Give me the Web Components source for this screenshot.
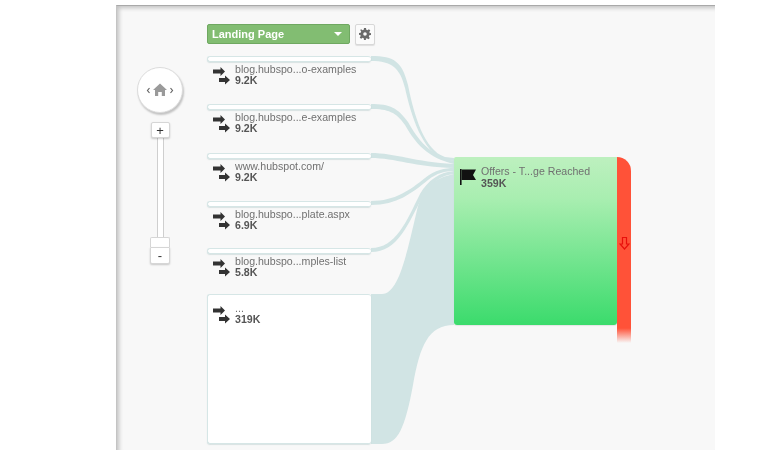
<!DOCTYPE html>
<html>
<head>
<meta charset="utf-8">
<style>
  html, body { margin: 0; background: #fff; overflow: hidden; }
  body { font-family: "Liberation Sans", Arial, sans-serif; }
</style>
</head>
<body>
<flow-panel>
  <zoom-control slot="zoom"></zoom-control>
  <step-select slot="toolbar">Landing Page</step-select>
  <flow-node slot="nodes" value="9.2K" pitch="48">blog.hubspo...o-examples</flow-node>
  <flow-node slot="nodes" value="9.2K" pitch="49">blog.hubspo...e-examples</flow-node>
  <flow-node slot="nodes" value="9.2K" pitch="48">www.hubspot.com/</flow-node>
  <flow-node slot="nodes" value="6.9K" pitch="47">blog.hubspo...plate.aspx</flow-node>
  <flow-node slot="nodes" value="5.8K" pitch="46">blog.hubspo...mples-list</flow-node>
  <flow-node slot="nodes" value="319K" pitch="150" big>...</flow-node>
  <goal-node slot="goal" value="359K">Offers - T...ge Reached</goal-node>
</flow-panel>

<script>
class FlowPanel extends HTMLElement {
  constructor() {
    super();
    this.attachShadow({ mode: "open" });
  }

  connectedCallback() {
    this.shadowRoot.innerHTML = `
      <style>
        :host { display: block; width: 768px; height: 450px; background: #fff; overflow: hidden; }
        .panel {
          position: relative;
          box-sizing: border-box;
          margin: 5px 0 0 116px;
          width: 599px;
          height: 445px;
          background: #f8f8f8;
          display: flex;
          border-top: 1px solid #a9a9a9;
          border-left: 1px solid #c4c4c4;
          box-shadow: inset 3px 3px 4px -1px rgba(0,0,0,.22);
          filter: blur(.5px);
        }
        .links { position: absolute; left: -117px; top: -6px; width: 768px; height: 450px; }
        .links path { fill: #d1e4e4; }
        .left { position: relative; width: 90px; padding: 0 0 0 20px; box-sizing: border-box; padding-top: 61px; }
        .middle { position: relative; width: 247px; display: flex; flex-direction: column; padding-top: 18px; }
        .nodes { display: flex; flex-direction: column; margin-top: 12px; }
        .right { position: relative; padding-top: 151px; }
      </style>
      <div class="panel">
        <svg class="links" viewBox="0 0 768 450">
          <path d="M371 56 C 395 56 402 62 408 85 C 414 115 424 150 445 157 L454 158 L454 161 L445 160 C 422 152 411 115 405 88 C 400 68 392 61 371 61 Z"/>
          <path d="M371 104 C 390 104 398 108 408 122 C 418 140 430 155 454 161 L454 164 C 428 158 415 143 405 125 C 396 112 388 109 371 109 Z"/>
          <path d="M371 153 C 395 153 415 162 454 164 L454 168 C 415 167 395 158 371 158 Z"/>
          <path d="M371 201 C 395 201 410 190 425 178 C 435 170 445 168 454 168 L454 171 C 445 171 437 173 428 180 C 412 193 397 205 371 205 Z"/>
          <path d="M371 248 C 396 248 406 222 420 194 C 428 180 440 172 454 171 L454 174 C 441 175 431 183 423 196 C 408 224 398 252 371 252 Z"/>
          <path d="M371 294 L382 294 C 399 294 407 252 417 210 C 424 184 436 178 454 174 L454 325 C 428 325 420 346 413 385 C 405 428 398 444 382 444 L371 444 Z"/>
        </svg>
        <div class="left"><slot name="zoom"></slot></div>
        <div class="middle">
          <slot name="toolbar"></slot>
          <div class="nodes"><slot name="nodes"></slot></div>
        </div>
        <div class="right"><slot name="goal"></slot></div>
      </div>
    `;
  }
}

class ZoomControl extends HTMLElement {
  constructor() {
    super();
    this.attachShadow({ mode: "open" });
  }

  connectedCallback() {
    this.shadowRoot.innerHTML = `
      <style>
        :host { display: flex; flex-direction: column; align-items: center; width: 46px; }
        .pad {
          width: 46px; height: 46px; border-radius: 50%; background: #fff;
          border: 1px solid #dcdcdc; box-sizing: border-box;
          box-shadow: 1px 2px 2px rgba(0,0,0,.22);
          display: flex; align-items: center; justify-content: center;
        }
        .btn {
          box-sizing: border-box; background: #fff; border: 1px solid #d6d6d6;
          box-shadow: 0 1px 2px rgba(0,0,0,.2); border-radius: 2px;
          display: flex; align-items: center; justify-content: center;
          font: 13px/1 "Liberation Sans", sans-serif; color: #333;
          position: relative; z-index: 1;
        }
        .plus { width: 19px; height: 16px; margin-top: 9px; }
        .track {
          width: 7px; height: 100px; box-sizing: border-box; background: #fff;
          border-left: 1px solid #cfcfcf; border-right: 1px solid #cfcfcf;
          margin-top: -1px;
        }
        .handle { width: 20px; height: 10px; border-bottom: 0; border-radius: 2px 2px 0 0; box-shadow: none; }
        .minus { width: 20px; height: 17px; border-radius: 0 0 2px 2px; }
      </style>
      <div class="pad">
        <svg width="34" height="16" viewBox="0 0 34 16">
          <path d="M6.5 6 L4.5 8.5 L6.5 11 M27.5 6 L29.5 8.5 L27.5 11" fill="none" stroke="#666" stroke-width="1.2"/>
          <path d="M17 1.5 L24 8 H22 V14 H18.8 V10 H15.2 V14 H12 V8 H10 Z" fill="#9a9a9a"/>
        </svg>
      </div>
      <div class="btn plus">+</div>
      <div class="track"></div>
      <div class="btn handle"></div>
      <div class="btn minus">-</div>
    `;
  }
}

class StepSelect extends HTMLElement {
  constructor() {
    super();
    this.attachShadow({ mode: "open" });
  }

  connectedCallback() {
    this.shadowRoot.innerHTML = `
      <style>
        :host { display: flex; align-items: center; gap: 5px; height: 20px; }
        .select {
          box-sizing: border-box; width: 143px; height: 20px; background: #82bd72;
          border: 1px solid #6fa861; border-radius: 2px; color: #fff;
          font: bold 11px/18px "Liberation Sans", sans-serif;
          padding: 0 7px 0 4px; display: flex; justify-content: space-between; align-items: center;
        }
        .caret { width: 0; height: 0; border: 4px solid transparent; border-top: 4px solid #fff; border-bottom: 0; }
        .gear {
          box-sizing: border-box; width: 20px; height: 21px; background: #fbfbfb;
          border: 1px solid #d8d8d8; border-radius: 2px; box-shadow: 0 1px 1px rgba(0,0,0,.1);
          display: flex; align-items: center; justify-content: center;
        }
      </style>
      <div class="select"><span><slot></slot></span><span class="caret"></span></div>
      <div class="gear">
        <svg width="12" height="12" viewBox="0 0 12 12">
          <path fill="#6a6a6a" fill-rule="evenodd" d="M5 0h2l.3 1.7 1.1.5L9.9 1.2l1.4 1.4-1 1.5.5 1.1L12 5v2l-1.7.3-.5 1.1 1 1.5-1.4 1.4-1.5-1-1.1.5L7 12H5l-.3-1.7-1.1-.5-1.5 1L.7 9.4l1-1.5-.5-1.1L0 7V5l1.7-.3.5-1.1-1-1.5L2.1 1.2l1.5 1 1.1-.5zM6 4.2a1.8 1.8 0 1 0 0 3.6 1.8 1.8 0 0 0 0-3.6z"/>
        </svg>
      </div>
    `;
  }
}

class FlowNode extends HTMLElement {
  constructor() {
    super();
    this.attachShadow({ mode: "open" });
  }

  connectedCallback() {
    const pitch = this.getAttribute("pitch") || 48;
    const big = this.hasAttribute("big");
    this.shadowRoot.innerHTML = `
      <style>
        :host { display: block; width: 164px; height: ${pitch}px; position: relative; color: #707070; font: 10.6px/11px "Liberation Sans", sans-serif; }
        .box {
          box-sizing: border-box; width: 164px; height: ${big ? "150px" : "6px"};
          background: #fff; border-radius: 3px; border: 1px solid #d6e6e6;
          border-width: 1px 0 1px 1px; box-shadow: 0 1px 1px rgba(120,160,160,.25);
        }
        .row { position: absolute; left: 6px; top: ${big ? 9 : 8}px; display: flex; gap: 4px; }
        b { display: block; color: #555; }
        svg { flex: none; margin-top: 2px; }
        .text { white-space: nowrap; }
      </style>
      <div class="box"></div>
      <div class="row">
        <svg width="18" height="20" viewBox="0 0 18 20">
          <path fill="#333" d="M0 3.5h7.5V1l4.5 4.5L7.5 10V7.5H0z"/>
          <path fill="#333" d="M6 12h6V9.5l5 4.5-5 4.5V16H6z"/>
        </svg>
        <div class="text"><slot></slot><b>${this.getAttribute("value")}</b></div>
      </div>
    `;
  }
}

class GoalNode extends HTMLElement {
  constructor() {
    super();
    this.attachShadow({ mode: "open" });
  }

  connectedCallback() {
    this.shadowRoot.innerHTML = `
      <style>
        :host { display: flex; align-items: flex-start; color: #707070; font: 10.6px/12px "Liberation Sans", sans-serif; }
        .card {
          box-sizing: border-box; width: 163px; height: 168px; padding: 8px 0 0 6px;
          background: linear-gradient(#bdf0bf, #a8eeb0 25%, #3bdb6c);
          border-radius: 2px 0 3px 3px; display: flex; gap: 4px;
          box-shadow: 0 1px 1px rgba(0,0,0,.08);
        }
        b { display: block; color: #555; }
        svg { flex: none; margin-top: 3px; }
        .text { white-space: nowrap; }
        .drop {
          width: 14px; height: 186px; border-radius: 0 14px 0 0;
          background: linear-gradient(#ff5238 92%, rgba(255,82,56,0));
          display: flex; align-items: center; justify-content: center;
        }
        .drop svg { margin: 0; position: relative; top: -7px; }
      </style>
      <div class="card">
        <svg width="17" height="17" viewBox="0 0 17 17">
          <path fill="#111" d="M0 1h1.6v16H0z"/>
          <path fill="#111" d="M1.6 1.5h14.4l-3 5.5 3 5H1.6z"/>
        </svg>
        <div class="text"><slot></slot><b>${this.getAttribute("value")}</b></div>
      </div>
      <div class="drop">
        <svg width="11" height="13" viewBox="0 0 11 13">
          <path d="M3.5 .5h4v6.5h2.5L5.5 12 1 7h2.5z" fill="none" stroke="#e8100c" stroke-width="1.2"/>
        </svg>
      </div>
    `;
  }
}

customElements.define("flow-panel", FlowPanel);
customElements.define("zoom-control", ZoomControl);
customElements.define("step-select", StepSelect);
customElements.define("flow-node", FlowNode);
customElements.define("goal-node", GoalNode);
</script>
</body>
</html>
